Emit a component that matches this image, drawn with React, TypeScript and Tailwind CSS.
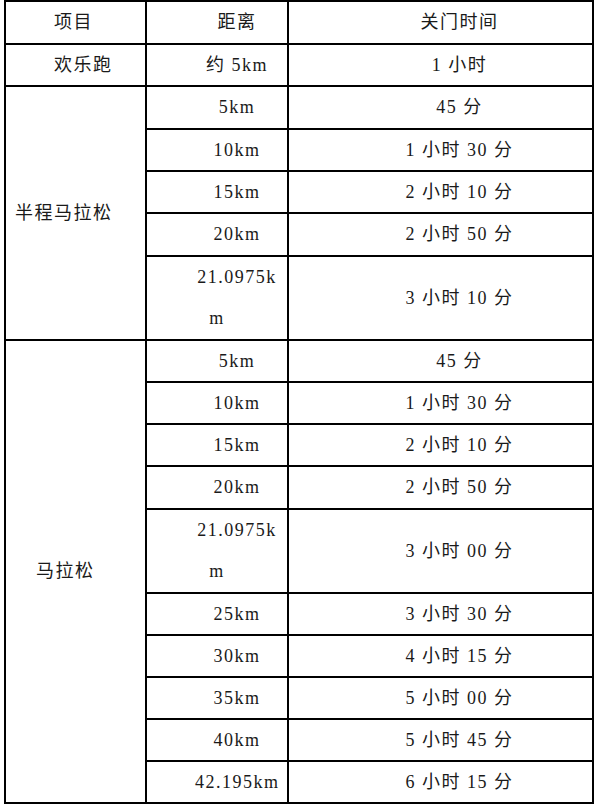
type Row = {
  item?: { text: string; span: number; indent: string };
  dist: string[];
  time: string;
  h: string;
};

const rows: Row[] = [
  { item: { text: "欢乐跑", span: 1, indent: "indent-[39px]" }, dist: ["约 5km"], time: "1 小时", h: "h-[42px]" },
  { item: { text: "半程马拉松", span: 5, indent: "indent-0" }, dist: ["5km"], time: "45 分", h: "h-[43px]" },
  { dist: ["10km"], time: "1 小时 30 分", h: "h-[42px]" },
  { dist: ["15km"], time: "2 小时 10 分", h: "h-[42px]" },
  { dist: ["20km"], time: "2 小时 50 分", h: "h-[43px]" },
  { dist: ["21.0975k", "m"], time: "3 小时 10 分", h: "h-[84px]" },
  { item: { text: "马拉松", span: 10, indent: "indent-[21px]" }, dist: ["5km"], time: "45 分", h: "h-[42px]" },
  { dist: ["10km"], time: "1 小时 30 分", h: "h-[42px]" },
  { dist: ["15km"], time: "2 小时 10 分", h: "h-[42px]" },
  { dist: ["20km"], time: "2 小时 50 分", h: "h-[43px]" },
  { dist: ["21.0975k", "m"], time: "3 小时 00 分", h: "h-[84px]" },
  { dist: ["25km"], time: "3 小时 30 分", h: "h-[42px]" },
  { dist: ["30km"], time: "4 小时 15 分", h: "h-[42px]" },
  { dist: ["35km"], time: "5 小时 00 分", h: "h-[42px]" },
  { dist: ["40km"], time: "5 小时 45 分", h: "h-[42px]" },
  { dist: ["42.195km"], time: "6 小时 15 分", h: "h-[42px]" },
];

const cell = "border-2 border-black align-middle p-0";

export default function App() {
  return (
    <div
      className="min-h-[806px] bg-white pl-[4px] pt-0 text-[18px] tracking-[1.5px] text-[#1a1a1a]"
      style={{ fontFamily: '"Liberation Serif", "Noto Sans CJK SC", serif' }}
    >
      <table className="w-[588px] table-fixed border-collapse">
        <colgroup>
          <col className="w-[141px]" />
          <col className="w-[142px]" />
          <col className="w-[305px]" />
        </colgroup>
        <thead>
          <tr className="h-[43px]">
            <th className={`${cell} pl-[9px] text-left font-normal indent-[39px]`}>项目</th>
            <th className={`${cell} px-[8px] text-center font-normal indent-[40px]`}>距离</th>
            <th className={`${cell} px-[8px] text-center font-normal indent-[38px]`}>关门时间</th>
          </tr>
        </thead>
        <tbody>
          {rows.map((r, i) => (
            <tr key={i} className={r.h}>
              {r.item && (
                <td rowSpan={r.item.span} className={`${cell} pl-[9px] text-left ${r.item.indent}`}>
                  {r.item.text}
                </td>
              )}
              <td className={`${cell} px-[8px] text-center indent-[40px] ${r.dist.length > 1 ? "leading-[41px]" : ""}`}>
                {r.dist[0]}
                {r.dist.length > 1 && (
                  <>
                    <br />
                    {r.dist[1]}
                  </>
                )}
              </td>
              <td className={`${cell} px-[8px] text-center indent-[38px]`}>{r.time}</td>
            </tr>
          ))}
        </tbody>
      </table>
    </div>
  );
}
